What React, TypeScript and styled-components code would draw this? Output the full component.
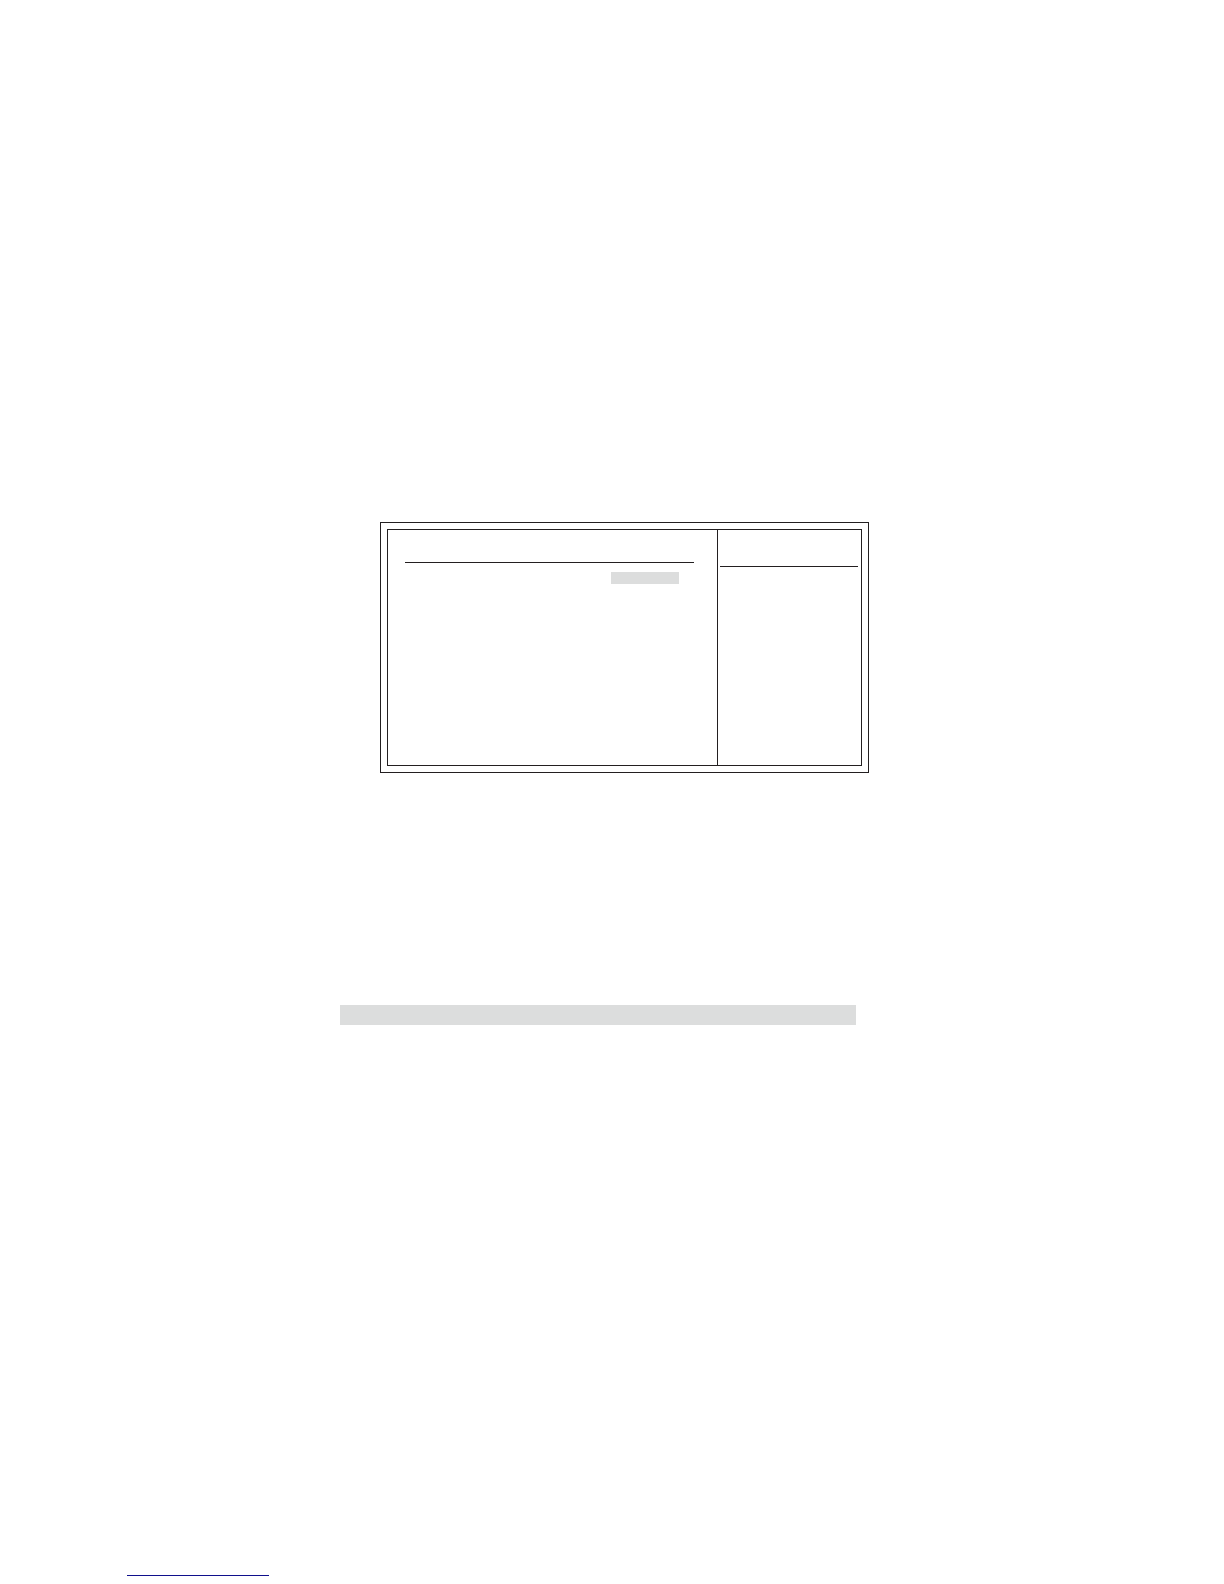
import React from "react";
import styled, { createGlobalStyle } from "styled-components";

const INK = "#231f20";
const SHADE = "#dcdddd";
const LINK = "#10108c";

const GlobalStyle = createGlobalStyle`
  *, *::before, *::after { box-sizing: border-box; }
  body {
    margin: 0;
    background: #ffffff;
    color: ${INK};
    font-family: "Liberation Sans", Arial, sans-serif;
  }
`;

const Page = styled.main`
  display: flex;
  flex-direction: column;
  min-height: 100vh;
  padding: 522px 0 8px;
`;

const Frame = styled.section`
  margin: 0 355px 0 380px;
  padding: 6px;
  border: 1px solid ${INK};
`;

const Panels = styled.div`
  display: grid;
  grid-template-columns: minmax(0, 1fr) 144px;
  min-height: 237px;
  border: 1px solid ${INK};
`;

const SettingsPanel = styled.div`
  padding: 32px 23px 0 17px;
`;

const HelpPanel = styled.aside`
  padding: 36px 3px 0 2px;
  border-left: 1px solid ${INK};
`;

const Rule = styled.hr`
  height: 1px;
  margin: 0;
  border: 0;
  background: ${INK};
`;

const Row = styled.div`
  display: flex;
  justify-content: flex-end;
  padding: 9px 15px 0 0;
`;

const Highlight = styled.div`
  width: 68px;
  height: 12px;
  background: ${SHADE};
`;

const Band = styled.div`
  height: 20px;
  margin: 232px 368px 0 340px;
  background: ${SHADE};
`;

const Footer = styled.footer`
  display: flex;
  margin-top: auto;
  padding-left: 127px;
`;

const FooterLink = styled.a`
  width: 142px;
  height: 16px;
  border-bottom: 1px solid ${LINK};
`;

export default function App() {
  return (
    <>
      <GlobalStyle />
      <Page>
        <Frame>
          <Panels>
            <SettingsPanel>
              <Rule />
              <Row>
                <Highlight />
              </Row>
            </SettingsPanel>
            <HelpPanel>
              <Rule />
            </HelpPanel>
          </Panels>
        </Frame>
        <Band />
        <Footer>
          <FooterLink href="#" aria-label="Home" />
        </Footer>
      </Page>
    </>
  );
}
